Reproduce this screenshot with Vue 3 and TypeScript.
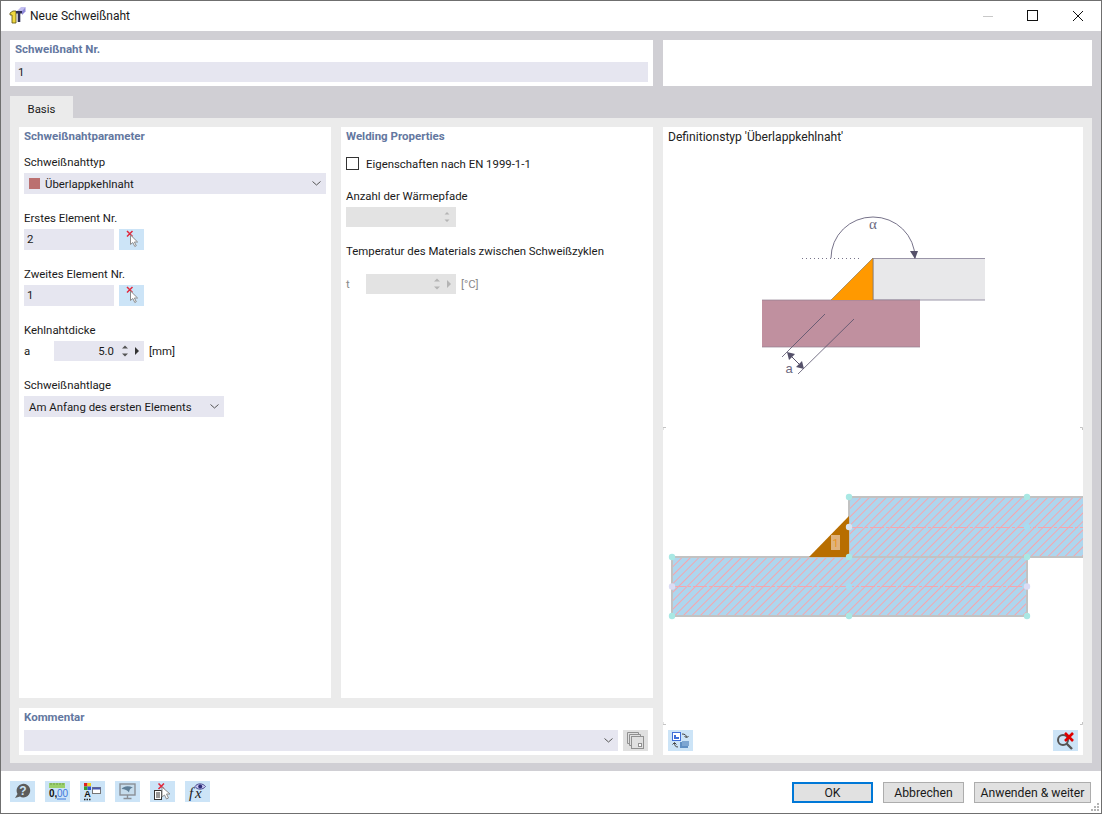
<script setup lang="ts">
import { ref } from 'vue'

const seamNo = ref('1')
const firstElement = ref('2')
const secondElement = ref('1')
const thickness = ref('5.0')

// teal corner handles of the preview plates
const handles: [number, number][] = [
  [672, 557], [672, 616], [849, 616], [1027, 616], [1027, 557],
  [849, 557], [849, 497], [1027, 497],
]
</script>

<template>
  <div class="window">
    <header class="titlebar">
      <svg class="app-icon" width="18" height="18" viewBox="0 0 18 18">
        <path d="M8 4 L12 0 H16.5 L13 4 Z" fill="#c3bff0" />
        <path d="M13 4 L16.5 0 V4.5 L13 8 Z" fill="#8d86d8" />
        <path d="M1 6 L4 4 H7 V16 H3 V8 H1 Z" fill="#f0d840" stroke="#5a5010" stroke-width="0.8" />
        <path d="M7 4 H13 V6.5 H11.3 V15 H8.7 V6.5 H7 Z" fill="#2f2f55" />
      </svg>
      <span class="title">Neue Schweißnaht</span>
      <div class="win-controls">
        <svg width="12" height="12" viewBox="0 0 12 12"><path d="M1 6.5 H11" stroke="#c8c8c8" /></svg>
        <svg width="12" height="12" viewBox="0 0 12 12"><rect x="0.5" y="0.5" width="10" height="10" fill="none" stroke="#111" /></svg>
        <svg width="12" height="12" viewBox="0 0 12 12"><path d="M1 1 L11 11 M11 1 L1 11" stroke="#111" /></svg>
      </div>
    </header>

    <main class="body">
      <div class="top-row">
        <section class="card seam-no">
          <h3 class="heading">Schweißnaht Nr.</h3>
          <div class="input wide">{{ seamNo }}</div>
        </section>
        <section class="card" />
      </div>

      <div class="tabs"><div class="tab">Basis</div></div>

      <div class="tab-panel">
        <div class="left-area">
          <section class="card column">
            <h3 class="heading">Schweißnahtparameter</h3>
            <div class="field first">
              <label>Schweißnahttyp</label>
              <div class="select">
                <span class="swatch" />
                <span>Überlappkehlnaht</span>
                <svg class="chevron" width="11" height="7" viewBox="0 0 11 7"><path d="M1.5 1.5 L5.5 5 L9.5 1.5" fill="none" stroke="#555" /></svg>
              </div>
            </div>
            <div class="field">
              <label>Erstes Element Nr.</label>
              <div class="row">
                <div class="input id-input">{{ firstElement }}</div>
                <button class="tool-btn pick" aria-label="Element wählen">
                  <svg width="25" height="21" viewBox="0 0 25 21">
                    <path d="M8 2 L13.5 7.5 M13.5 2 L8 7.5" stroke="#e0283c" stroke-width="1.5" />
                    <path d="M11.5 6 V15.5 L13.8 13.5 L15.8 17.5 L17.3 16.7 L15.4 13 L18.6 13 Z" fill="#fff" stroke="#8c8c8c" />
                  </svg>
                </button>
              </div>
            </div>
            <div class="field">
              <label>Zweites Element Nr.</label>
              <div class="row">
                <div class="input id-input">{{ secondElement }}</div>
                <button class="tool-btn pick" aria-label="Element wählen">
                  <svg width="25" height="21" viewBox="0 0 25 21">
                    <path d="M8 2 L13.5 7.5 M13.5 2 L8 7.5" stroke="#e0283c" stroke-width="1.5" />
                    <path d="M11.5 6 V15.5 L13.8 13.5 L15.8 17.5 L17.3 16.7 L15.4 13 L18.6 13 Z" fill="#fff" stroke="#8c8c8c" />
                  </svg>
                </button>
              </div>
            </div>
            <div class="field">
              <label>Kehlnahtdicke</label>
              <div class="row">
                <span class="symbol">a</span>
                <div class="input spin">
                  <span class="spin-value">{{ thickness }}</span>
                  <svg width="8" height="14" viewBox="0 0 8 14"><path d="M4 1.5 L7 4.5 H1 Z M4 12.5 L1 9.5 H7 Z" fill="#555" /></svg>
                  <svg class="spin-next" width="6" height="14" viewBox="0 0 6 14"><path d="M1 3 L5 7 L1 11 Z" fill="#333" /></svg>
                </div>
                <span class="unit">[mm]</span>
              </div>
            </div>
            <div class="field">
              <label>Schweißnahtlage</label>
              <div class="select position">
                <span>Am Anfang des ersten Elements</span>
                <svg class="chevron" width="11" height="7" viewBox="0 0 11 7"><path d="M1.5 1.5 L5.5 5 L9.5 1.5" fill="none" stroke="#555" /></svg>
              </div>
            </div>
          </section>

          <section class="card column">
            <h3 class="heading">Welding Properties</h3>
            <div class="check-row">
              <span class="checkbox" />
              <span>Eigenschaften nach EN 1999-1-1</span>
            </div>
            <div class="field heat-paths">
              <label>Anzahl der Wärmepfade</label>
              <div class="input disabled spin-off">
                <svg width="8" height="14" viewBox="0 0 8 14"><path d="M4 2 L6.5 4.5 H1.5 Z M4 12 L1.5 9.5 H6.5 Z" fill="#b4b4b4" /></svg>
              </div>
            </div>
            <div class="field">
              <label>Temperatur des Materials zwischen Schweißzyklen</label>
              <div class="row temp-row">
                <span class="symbol temp muted">t</span>
                <div class="input disabled spin temp-input">
                  <span class="spin-value" />
                  <svg width="8" height="14" viewBox="0 0 8 14"><path d="M4 1.5 L7 4.5 H1 Z M4 12.5 L1 9.5 H7 Z" fill="#b4b4b4" /></svg>
                  <svg class="spin-next" width="6" height="14" viewBox="0 0 6 14"><path d="M1 3 L5 7 L1 11 Z" fill="#b4b4b4" /></svg>
                </div>
                <span class="unit muted">[°C]</span>
              </div>
            </div>
          </section>

          <section class="card comment">
            <h3 class="heading">Kommentar</h3>
            <div class="row">
              <div class="select comment-select">
                <svg class="chevron" width="11" height="7" viewBox="0 0 11 7"><path d="M1.5 1.5 L5.5 5 L9.5 1.5" fill="none" stroke="#555" /></svg>
              </div>
              <button class="tool-btn grey" aria-label="Kommentar kopieren">
                <svg width="25" height="21" viewBox="0 0 25 21">
                  <path d="M4.5 2.5 H15.5 V4.5 M6.5 4.5 H17.5 V6.5 M4.5 2.5 V13.5 H6.5 M6.5 4.5 V15.5 H8.5" fill="none" stroke="#909090" />
                  <rect x="8.5" y="6.5" width="12" height="12" fill="#e0e0e0" stroke="#909090" />
                  <rect x="15.5" y="13.5" width="3" height="3" fill="#fff" stroke="#909090" />
                </svg>
              </button>
            </div>
          </section>
        </div>

        <section class="card preview">
          <div class="preview-title">Definitionstyp 'Überlappkehlnaht'</div>

          <svg class="scheme" width="420" height="282" viewBox="663 145 420 282">
            <rect x="873" y="258.5" width="112" height="41.5" fill="#e8e8ea" />
            <path d="M873 258.5 H985 M873 300 H985 M873 258 V300" fill="none" stroke="#9a95a8" />
            <rect x="762" y="300" width="158" height="47" fill="#c0909f" />
            <path d="M762 300 H920 M762 347 H920" stroke="#8f7f90" stroke-width="0.7" />
            <path d="M831 300 L873 258 V300 Z" fill="#ff9900" />
            <path d="M831 300 L873 258 V300" fill="none" stroke="#8a7a60" stroke-width="0.7" />
            <path d="M802 258.5 H862" stroke="#77738a" stroke-dasharray="1 3" />
            <path d="M831 258 A42 41 0 0 1 915 258" fill="none" stroke="#77738a" />
            <path d="M910 251 L918 251 L915 259 Z" fill="#55516a" />
            <path d="M782 357 L825 314 M798 374 L854 319" stroke="#55516a" stroke-width="0.8" />
            <path d="M789 354 L802 367" stroke="#55516a" />
            <path d="M787 352 L795 354 L789 360 Z M804 369 L796 367 L802 361 Z" fill="#55516a" />
            <text class="dim-text alpha" x="873" y="229" text-anchor="middle">α</text>
            <text class="dim-text" x="789" y="373" text-anchor="middle">a</text>
          </svg>

          <svg class="model" width="420" height="298" viewBox="663 427 420 298">
            <defs>
              <pattern id="hatch" width="6" height="6" patternUnits="userSpaceOnUse" patternTransform="rotate(-45)">
                <rect width="6" height="6" fill="#aed6ee" />
                <rect width="6" height="1" fill="#f5a6ae" />
              </pattern>
            </defs>
            <path d="M663 430 V427.5 H666 M1080 427.5 H1082.5 V430 M663 722 V724.5 H666 M1080 724.5 H1082.5 V722" fill="none" stroke="#c4c4c4" />
            <rect x="849" y="497" width="240" height="60" fill="url(#hatch)" stroke="#c2c2c2" stroke-width="2" />
            <rect x="672" y="557" width="355" height="59" fill="url(#hatch)" stroke="#c2c2c2" stroke-width="2" />
            <path d="M672 586.5 H1027 M849 527.5 H1083" stroke="#f5a6ae" stroke-dasharray="14 2 3 2" />
            <path d="M809 557 L849 516 V557 Z" fill="#b86e00" />
            <rect x="831" y="535" width="9" height="15" fill="#dfb27c" />
            <text class="node-label" x="835.5" y="547" text-anchor="middle">1</text>
            <circle v-for="h in handles" :key="h.join()" :cx="h[0]" :cy="h[1]" r="3.2" fill="#a9e8e4" />
            <circle cx="672" cy="586.5" r="3.2" fill="#dcdcf4" />
            <circle cx="1027" cy="586.5" r="3.2" fill="#dcdcf4" />
            <circle cx="849" cy="586.5" r="3.2" fill="#a8dcf0" />
            <circle cx="849" cy="527" r="3.2" fill="#d8e4f2" />
            <circle cx="1027" cy="527" r="3.2" fill="#a8dcf0" />
          </svg>

          <div class="preview-tools">
            <button class="tool-btn" aria-label="Ansicht wechseln">
              <svg width="25" height="21" viewBox="0 0 25 21">
                <rect x="4.5" y="2.5" width="8" height="8" fill="#fff" stroke="#3f6fd8" />
                <path d="M6 5 H8 V7 H11 V9 H6 Z" fill="#3f6fd8" />
                <path d="M14 4 C17 4 18 5 18.5 7 M16.5 6 L18.5 8 L20.5 6 M10 17 C7 17 6.5 15 6.5 13 M4.5 14.5 L6.5 12.5 L8.5 14.5" fill="none" stroke="#444" />
                <path d="M12 12 H20 V18 H12 Z" fill="#5f8fc4" />
                <path d="M14 11 H21 V16 H14 Z" fill="#7da6d2" />
              </svg>
            </button>
            <button class="tool-btn" aria-label="Zoom zurücksetzen">
              <svg width="25" height="21" viewBox="0 0 25 21">
                <circle cx="10" cy="10" r="5" fill="none" stroke="#555" stroke-width="2" />
                <path d="M13.5 13.5 L19 19" stroke="#555" stroke-width="2.4" />
                <path d="M12 3 L20 11 M20 3 L12 11" stroke="#e00000" stroke-width="2.6" />
              </svg>
            </button>
          </div>
        </section>
      </div>
    </main>

    <footer class="footer">
      <div class="footer-tools">
        <button class="tool-btn" aria-label="Hilfe">
          <svg width="25" height="21" viewBox="0 0 25 21">
            <path d="M5 17 L7.5 13 A6.8 6.8 0 1 1 10 15.5 Z" fill="#5c5c5c" />
            <text class="icon-help" x="13" y="13.5" text-anchor="middle">?</text>
          </svg>
        </button>
        <button class="tool-btn" aria-label="Einheiten">
          <svg width="25" height="21" viewBox="0 0 25 21">
            <rect x="4" y="2" width="16" height="5" fill="#9bd06c" />
            <path d="M6 2 V4 M9 2 V4 M12 2 V4 M15 2 V4 M18 2 V4" stroke="#6f9f4a" />
            <text class="icon-num" x="4" y="16">0,</text>
            <text class="icon-num blue" x="12" y="16">00</text>
            <path d="M12 18 H21" stroke="#3d78dc" />
          </svg>
        </button>
        <button class="tool-btn" aria-label="Darstellung">
          <svg width="25" height="21" viewBox="0 0 25 21">
            <rect x="4" y="2" width="3.5" height="3.5" fill="#e02020" />
            <rect x="7.5" y="2" width="3.5" height="3.5" fill="#f0d020" />
            <rect x="4" y="5.5" width="3.5" height="3.5" fill="#30a030" />
            <rect x="7.5" y="5.5" width="3.5" height="3.5" fill="#3050d0" />
            <text class="icon-a" x="7.5" y="16" text-anchor="middle">A</text>
            <path d="M4 18.5 H11" stroke="#222" stroke-dasharray="1.5 1" stroke-width="1.5" />
            <rect x="12.5" y="6.5" width="8" height="6" fill="#fff" stroke="#777" />
            <rect x="12.5" y="6.5" width="8" height="2" fill="#4a5ab0" />
          </svg>
        </button>
        <button class="tool-btn" aria-label="Ansicht">
          <svg width="25" height="21" viewBox="0 0 25 21">
            <rect x="5" y="3" width="15" height="11" fill="#c6dcec" stroke="#8a8f96" stroke-width="1.4" />
            <path d="M12.5 14 V17 M8.5 17.5 H16.5" stroke="#8a8f96" stroke-width="1.4" />
            <path d="M6.5 8 C9 5 13 4.5 18 6.5 C15 7 14.5 9 14 11.5 C12.5 9.5 10 8 6.5 8 Z" fill="#5f7f98" />
          </svg>
        </button>
        <button class="tool-btn" aria-label="Objekte wählen">
          <svg width="25" height="21" viewBox="0 0 25 21">
            <path d="M8.5 2.5 L14 8 M14 2.5 L8.5 8" stroke="#e0283c" stroke-width="1.6" />
            <rect x="4.5" y="9.5" width="7" height="9" fill="#fff" stroke="#333" />
            <path d="M6 12 H10 M6 14 H10 M6 16 H10" stroke="#333" />
            <path d="M12 6 V16 L14.5 14 L16.5 18 L18.5 17 L16.5 13 L20 13 Z" fill="#fff" stroke="#8c8c8c" />
          </svg>
        </button>
        <button class="tool-btn" aria-label="Formel">
          <svg width="25" height="21" viewBox="0 0 25 21">
            <text class="icon-fx" x="4" y="17">f</text>
            <text class="icon-fx" x="10" y="17">x</text>
            <path d="M10 5.5 C12 2 18 2 20.5 5.5 C18 9 12 9 10 5.5 Z" fill="#c8c8f0" stroke="#4a4a90" />
            <circle cx="15.2" cy="5.5" r="2" fill="#2c2c78" />
          </svg>
        </button>
      </div>
      <div class="footer-actions">
        <button class="btn default">OK</button>
        <button class="btn">Abbrechen</button>
        <button class="btn apply">Anwenden &amp; weiter</button>
      </div>
      <svg class="grip" width="9" height="9" viewBox="0 0 9 9">
        <path d="M6 0 H8 V2 H6 Z M3 3 H5 V5 H3 Z M6 3 H8 V5 H6 Z M0 6 H2 V8 H0 Z M3 6 H5 V8 H3 Z M6 6 H8 V8 H6 Z" fill="#b4b4b4" />
      </svg>
    </footer>
  </div>
</template>

<style scoped>
.window {
  position: relative;
  box-sizing: border-box;
  width: 1102px;
  height: 814px;
  display: flex;
  flex-direction: column;
  border: 1px solid #6f6f6f;
  background: #fff;
  color: #1a1a1a;
  font-family: Roboto, "Noto Sans", sans-serif;
  font-size: 11.4px;
  line-height: 16px;
}

/* Title bar */
.titlebar {
  flex: 0 0 30px;
  display: flex;
  align-items: center;
  padding-left: 8px;
}

.app-icon {
  margin-right: 3px;
}

.title {
  font-size: 12px;
}

.win-controls {
  display: flex;
  gap: 33px;
  margin-left: auto;
  margin-right: 17px;
}

/* Grey client area */
.body {
  flex: 1;
  box-sizing: border-box;
  padding: 9px 9px 8px;
  background: #d0cfd4;
  display: flex;
  flex-direction: column;
  min-height: 0;
}

.top-row {
  display: grid;
  grid-template-columns: 643px 429px;
  gap: 10px;
  height: 46px;
}

.card {
  background: #fff;
}

.heading {
  margin: 0;
  height: 18px;
  padding-left: 5px;
  color: #6377a0;
  font-size: 11.5px;
  font-weight: 700;
  line-height: 18px;
}

.seam-no .wide {
  margin: 4px 5px 0;
  height: 20px;
  padding-left: 3px;
}

.input {
  box-sizing: border-box;
  background: #e6e6f0;
  line-height: 21px;
}

.tabs {
  margin-top: 10px;
  display: flex;
}

.tab {
  width: 63px;
  height: 22px;
  background: #ebebeb;
  text-align: center;
  line-height: 26px;
}

.tab-panel {
  flex: 1;
  min-height: 0;
  box-sizing: border-box;
  padding: 9px 9px 8px;
  background: #ebebeb;
  display: grid;
  grid-template-columns: 634px 420px;
  gap: 10px;
}

.left-area {
  display: grid;
  grid-template-columns: 312px 312px;
  grid-template-rows: 571px 47px;
  gap: 10px;
}

/* Form columns */
.column {
  padding: 0 5px;
}

.column .heading {
  padding-left: 0;
}

.field {
  margin-top: 16px;
}

.field.first {
  margin-top: 9px;
}

.field label {
  display: block;
  margin-bottom: 3px;
}

.row {
  display: flex;
  align-items: center;
}

.select {
  display: flex;
  align-items: center;
  box-sizing: border-box;
  height: 21px;
  padding: 0 4px 0 5px;
  background: #e6e6f0;
}

.chevron {
  margin-left: auto;
}

.swatch {
  width: 11px;
  height: 11px;
  margin-right: 5px;
  background: #bb7070;
}

.position {
  width: 200px;
}

.id-input {
  width: 90px;
  padding-left: 3px;
}

.tool-btn {
  width: 25px;
  height: 21px;
  padding: 0;
  border: none;
  background: #cce4f7;
  display: block;
}

.tool-btn svg {
  display: block;
}

.pick {
  margin-left: 5px;
}

.symbol {
  width: 30px;
}

.spin {
  width: 90px;
  height: 20px;
  display: flex;
  align-items: center;
}

.spin-value {
  flex: 1;
  text-align: right;
  padding-right: 7px;
}

.spin-next {
  margin: 0 4px 0 5px;
}

.unit {
  margin-left: 5px;
}

.muted {
  color: #8a8a8a;
}

.check-row {
  display: flex;
  align-items: center;
  height: 17px;
  margin-top: 10px;
}

.checkbox {
  box-sizing: border-box;
  width: 13px;
  height: 13px;
  margin-right: 7px;
  border: 1px solid #333;
}

.heat-paths {
  margin-top: 16px;
}

.disabled {
  background: #e3e3e3;
}

.spin-off {
  width: 110px;
  height: 20px;
  display: flex;
  align-items: center;
  justify-content: flex-end;
  padding-right: 5px;
}

.temp-row {
  margin-top: 15px;
}

.temp {
  width: 20px;
}

.comment {
  grid-column: 1 / 3;
  padding: 0 5px;
}

.comment .heading {
  padding-left: 0;
}

.comment .row {
  margin-top: 4px;
}

.comment-select {
  width: 594px;
}

.grey {
  margin-left: 5px;
  background: #e0e0e0;
}

/* Right preview column */
.preview {
  grid-row: 1;
  grid-column: 2;
  display: flex;
  flex-direction: column;
}

.preview-title {
  height: 18px;
  padding-left: 5px;
  color: #222;
  font-size: 12.1px;
  line-height: 20px;
}

.scheme,
.model {
  display: block;
}

.dim-text {
  fill: #6d6a80;
  font-family: "Liberation Sans", sans-serif;
  font-size: 13px;
}

.alpha {
  font-family: "Liberation Serif", serif;
  font-size: 15px;
}

.node-label {
  fill: #e8921c;
  font-family: Roboto, sans-serif;
  font-size: 11px;
}

.preview-tools {
  display: flex;
  justify-content: space-between;
  padding: 5px 5px 0;
}

/* Footer */
.footer {
  flex: 0 0 42px;
  display: flex;
  align-items: flex-start;
  justify-content: space-between;
  padding: 10px 10px 0 9px;
  box-sizing: border-box;
}

.footer-tools {
  display: flex;
  gap: 10px;
}

.footer-actions {
  display: flex;
  gap: 10px;
  padding-top: 1px;
}

.icon-help {
  fill: #cce4f7;
  font-family: "Liberation Sans", sans-serif;
  font-size: 12px;
  font-weight: 700;
}

.icon-num {
  fill: #111;
  font-family: "Liberation Sans", sans-serif;
  font-size: 10px;
  font-weight: 700;
}

.icon-num.blue {
  fill: #3d78dc;
  font-weight: 400;
}

.icon-a {
  fill: #111;
  font-family: "Liberation Sans", sans-serif;
  font-size: 9px;
  font-weight: 700;
}

.icon-fx {
  fill: #222;
  font-family: "Liberation Serif", serif;
  font-size: 15px;
  font-style: italic;
}

.btn {
  box-sizing: border-box;
  width: 81px;
  height: 21px;
  padding: 0;
  border: 1px solid #adadad;
  background: #e1e1e1;
  color: #1a1a1a;
  font-family: inherit;
  font-size: 12.2px;
  line-height: 18px;
}

.btn.default {
  border: 2px solid #0078d7;
}

.btn.apply {
  width: 117px;
}

.grip {
  position: absolute;
  right: 1px;
  bottom: 1px;
}
</style>

<style>
html,
body {
  margin: 0;
  background: #fff;
}
</style>
